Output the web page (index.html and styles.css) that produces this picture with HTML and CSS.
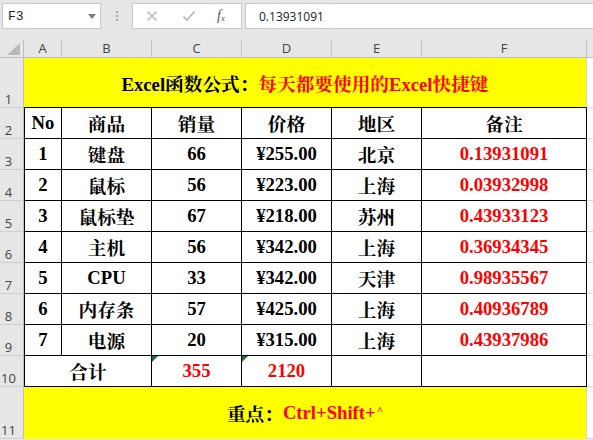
FILE: index.html
```html
<!DOCTYPE html>
<html lang="zh-CN">
<head>
<meta charset="utf-8">
<title>Excel</title>
<link rel="stylesheet" href="styles.css">
</head>
<body>
<div class="toolbar">
  <div class="namebox">
    <span class="name">F3</span>
    <svg class="drop" width="8" height="5" viewBox="0 0 8 5"><path d="M0 0H8L4 5Z" fill="#7a7a7a"/></svg>
  </div>
  <div class="grip"><i></i><i></i><i></i></div>
  <div class="fxbox">
    <svg class="ico" width="12" height="12" viewBox="0 0 12 12"><path d="M1.5 1.5L10.5 10.5M10.5 1.5L1.5 10.5" stroke="#b5b5b5" stroke-width="1.4" fill="none"/></svg>
    <svg class="ico" width="14" height="12" viewBox="0 0 14 12"><path d="M1.5 6.5L5 10L12.5 1.5" stroke="#b5b5b5" stroke-width="1.6" fill="none"/></svg>
    <span class="fx">f<sub>x</sub></span>
  </div>
  <div class="formula">0.13931091</div>
</div>

<div class="sheet">
  <div class="corner"><svg width="14" height="12" viewBox="0 0 14 12"><path d="M13 0V12H0Z" fill="#b9b9b9"/></svg></div>
  <div class="ch">A</div><div class="ch">B</div><div class="ch">C</div><div class="ch">D</div><div class="ch">E</div><div class="ch">F</div><div class="ch last"></div>

  <div class="rh">1</div>
  <div class="banner title"><span>Excel函数公式：</span><span class="red">每天都要使用的Excel快捷键</span></div>
  <div class="ex"></div>

  <div class="rh">2</div>
  <div class="c a">No</div><div class="c">商品</div><div class="c">销量</div><div class="c">价格</div><div class="c">地区</div><div class="c">备注</div><div class="ex"></div>

  <div class="rh">3</div>
  <div class="c a">1</div><div class="c">键盘</div><div class="c">66</div><div class="c">¥255.00</div><div class="c">北京</div><div class="c red">0.13931091</div><div class="ex"></div>

  <div class="rh">4</div>
  <div class="c a">2</div><div class="c">鼠标</div><div class="c">56</div><div class="c">¥223.00</div><div class="c">上海</div><div class="c red">0.03932998</div><div class="ex"></div>

  <div class="rh">5</div>
  <div class="c a">3</div><div class="c">鼠标垫</div><div class="c">67</div><div class="c">¥218.00</div><div class="c">苏州</div><div class="c red">0.43933123</div><div class="ex"></div>

  <div class="rh">6</div>
  <div class="c a">4</div><div class="c">主机</div><div class="c">56</div><div class="c">¥342.00</div><div class="c">上海</div><div class="c red">0.36934345</div><div class="ex"></div>

  <div class="rh">7</div>
  <div class="c a">5</div><div class="c">CPU</div><div class="c">33</div><div class="c">¥342.00</div><div class="c">天津</div><div class="c red">0.98935567</div><div class="ex"></div>

  <div class="rh">8</div>
  <div class="c a">6</div><div class="c">内存条</div><div class="c">57</div><div class="c">¥425.00</div><div class="c">上海</div><div class="c red">0.40936789</div><div class="ex"></div>

  <div class="rh">9</div>
  <div class="c a">7</div><div class="c">电源</div><div class="c">20</div><div class="c">¥315.00</div><div class="c">上海</div><div class="c red">0.43937986</div><div class="ex"></div>

  <div class="rh">10</div>
  <div class="c a span2">合计</div><div class="c red flag">355</div><div class="c red flag">2120</div><div class="c"></div><div class="c"></div><div class="ex"></div>

  <div class="rh">11</div>
  <div class="banner foot"><span>重点：</span><span class="red">Ctrl+Shift+<span class="caret">^</span></span></div>
  <div class="ex"></div>
</div>
</body>
</html>
```
FILE: styles.css
```css
* { box-sizing: border-box; }
html, body { margin: 0; padding: 0; }
body {
  width: 593px;
  height: 440px;
  overflow: hidden;
  background: #e6e6e6;
  font-family: "Liberation Serif", "Noto Serif CJK SC", "Noto Sans CJK SC", serif;
}

/* formula bar */
.toolbar {
  height: 40px;
  display: flex;
  align-items: flex-start;
  padding: 3px 0 0 2px;
  background: #e6e6e6;
}
.namebox {
  width: 99px;
  height: 26px;
  background: #fff;
  border: 1px solid #c9c9c9;
  display: flex;
  align-items: center;
  justify-content: space-between;
  padding: 0 4px 0 5px;
}
.name {
  font-family: "Liberation Mono", "DejaVu Sans Mono", monospace;
  font-size: 13px;
  color: #222;
}
.drop { margin-top: 1px; }
.grip {
  width: 31px;
  height: 26px;
  display: flex;
  flex-direction: column;
  align-items: center;
  justify-content: center;
  gap: 2px;
}
.grip i {
  display: block;
  width: 2px;
  height: 2px;
  background: #a9a9a9;
}
.fxbox {
  width: 110px;
  height: 26px;
  background: #fff;
  border: 1px solid #c9c9c9;
  display: flex;
  align-items: center;
  padding-left: 13px;
  gap: 24px;
}
.fx {
  font-family: "Liberation Serif", serif;
  font-style: italic;
  font-size: 14px;
  color: #555;
  margin-left: -3px;
}
.fx sub { font-size: 9px; vertical-align: -1px; }
.formula {
  flex: 1;
  height: 26px;
  margin-left: 3px;
  background: #fff;
  border: 1px solid #c9c9c9;
  border-right: none;
  font-family: "Open Sans", "Noto Sans", sans-serif;
  font-size: 12px;
  color: #222;
  display: flex;
  align-items: center;
  padding-left: 13px;
}

/* sheet */
.sheet {
  display: grid;
  grid-template-columns: 24px 38px 90px 90px 90px 90px 165px 6px;
  grid-template-rows: 18px 50px repeat(9, 31px) 52px;
  background: #fff;
}
.corner {
  background: #e6e6e6;
  border-right: 1px solid #bdbdbd;
  border-bottom: 1px solid #bdbdbd;
  display: flex;
  align-items: flex-end;
  justify-content: flex-end;
  padding: 0 2px 2px 0;
}
.ch {
  background: #e6e6e6;
  border-right: 1px solid #c4c4c4;
  border-bottom: 1px solid #bdbdbd;
  display: flex;
  align-items: center;
  justify-content: center;
  font-family: "Open Sans", "Noto Sans", sans-serif;
  font-size: 13px;
  color: #444;
  padding-bottom: 1px;
}
.ch.last { border-right: none; }
.rh {
  background: #e6e6e6;
  border-right: 1px solid #bdbdbd;
  border-bottom: 1px solid #cfcfcf;
  display: flex;
  align-items: flex-end;
  justify-content: center;
  padding-right: 6px;
  font-family: "Open Sans", "Noto Sans", sans-serif;
  font-size: 13px;
  line-height: 16px;
  color: #444;
}
.banner {
  grid-column: span 6;
  background: #ffff00;
  border-right: 1px solid #d4d4d4;
  display: flex;
  align-items: center;
  justify-content: center;
  font-weight: 700;
  font-size: 18.67px;
  color: #000;
}
.title { border-bottom: 1px solid #000; }
.caret {
  font-size: 11px;
  vertical-align: 5px;
  margin-left: 1px;
}
.ex {
  background: #fff;
  border-bottom: 1px solid #d9d9d9;
}
.c {
  position: relative;
  border-right: 1px solid #000;
  border-bottom: 1px solid #000;
  display: flex;
  align-items: center;
  justify-content: center;
  font-weight: 700;
  font-size: 18.67px;
  color: #000;
  white-space: nowrap;
}
.c.a { border-left: 1px solid #000; }
.span2 { grid-column: span 2; }
.red { color: #ff0000; }
.flag::before {
  content: "";
  position: absolute;
  left: 0;
  top: 0;
  width: 0;
  height: 0;
  border-top: 6px solid #1f6b3a;
  border-right: 6px solid transparent;
}
```
